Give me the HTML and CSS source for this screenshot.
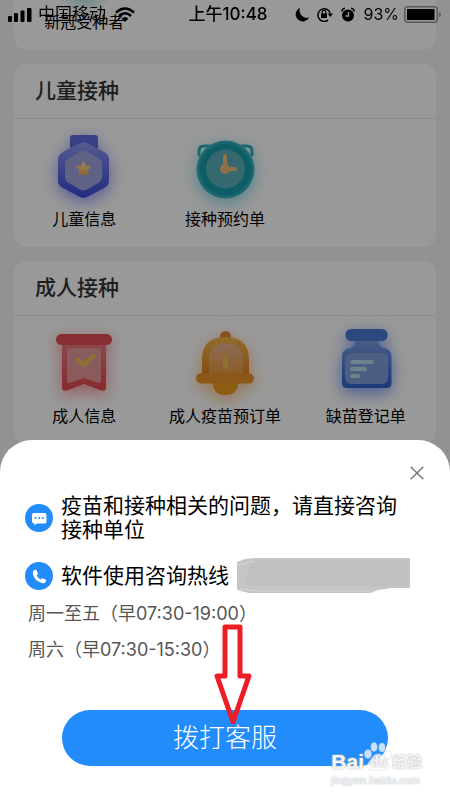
FILE: index.html
```html
<!DOCTYPE html>
<html lang="zh-CN">
<head>
<meta charset="utf-8">
<meta name="viewport" content="width=device-width, initial-scale=1">
<title>疫苗接种</title>
<link rel="stylesheet" href="styles.css">
</head>

<body>

<main class="page">
  <section class="card card-scrolled">
    <div class="grid">
      <a class="item" href="#"><span class="item-label">新冠受种者</span></a>
    </div>
  </section>

  <section class="card">
    <h2 class="card-title">儿童接种</h2>
    <div class="grid">
      <a class="item" href="#">
        <svg class="item-icon glow-indigo" viewBox="0 0 80 80">
          <defs>
            <linearGradient id="indigo" x1="0" y1="0" x2="0" y2="1">
              <stop offset="0" stop-color="#8e96f0"/><stop offset="1" stop-color="#3a49d6"/>
            </linearGradient>
            <linearGradient id="gold" x1="0" y1="0" x2="0" y2="1">
              <stop offset="0" stop-color="#ffd9a0"/><stop offset="1" stop-color="#f0a848"/>
            </linearGradient>
          </defs>
          <path d="M29 8h22q3 0 3 3v13H26V11q0-3 3-3z" fill="#5f6bdc"/>
          <path d="M35 16.500q4.500-2.500 9 0l17 9q4 2.500 4 7v21q0 4.500-4 7l-17 9q-4.500 2.500-9 0l-17-9q-4-2.500-4-7v-21q0-4.500 4-7z" fill="url(#indigo)"/>
          <path d="M36 24.500q3.500-2 7 0l12 7q3 2 3 5v14q0 3-3 5l-12 7q-3.500 2-7 0l-12-7q-3-2-3-5v-14q0-3 3-5z" fill="#9ea3dc"/>
          <path d="M39.500 35l2.100 4.200 4.700.7-3.400 3.300.8 4.700-4.200-2.200-4.200 2.200.8-4.700-3.400-3.300 4.700-.7z" fill="url(#gold)" stroke="url(#gold)" stroke-width="1.500" stroke-linejoin="round"/>
        </svg>
        <span class="item-label">儿童信息</span>
      </a>
      <a class="item" href="#">
        <svg class="item-icon glow-teal" viewBox="0 0 80 80">
          <defs>
            <radialGradient id="teal" cx=".5" cy=".5" r=".5">
              <stop offset="0" stop-color="#12909e"/><stop offset=".85" stop-color="#189caa"/><stop offset="1" stop-color="#42bac6"/>
            </radialGradient>
          </defs>
          <path d="M14 28v-4q0-5 5-5h6M67 28v-4q0-5-5-5h-6" fill="none" stroke="#28aebb" stroke-width="3" stroke-linecap="round"/>
          <circle cx="40.500" cy="42.500" r="29" fill="url(#teal)"/>
          <circle cx="40.500" cy="42" r="19.500" fill="#5bb0ba"/>
          <path d="M40 29v13h10" fill="none" stroke="#f0bd7c" stroke-width="4" stroke-linecap="round" stroke-linejoin="round"/>
          <circle cx="40" cy="42" r="5" fill="#eeb976"/>
        </svg>
        <span class="item-label">接种预约单</span>
      </a>
    </div>
  </section>

  <section class="card">
    <h2 class="card-title">成人接种</h2>
    <div class="grid">
      <a class="item" href="#">
        <svg class="item-icon glow-red" viewBox="0 0 80 80">
          <defs>
            <linearGradient id="red" x1="0" y1="0" x2="0" y2="1">
              <stop offset="0" stop-color="#e87a7e"/><stop offset="1" stop-color="#e4474b"/>
            </linearGradient>
          </defs>
          <path d="M18 18h44v45q0 5-5 3.500L40 60l-17 6.500q-5 1.500-5-3.500z" fill="url(#red)"/>
          <rect x="12" y="10" width="56" height="11" rx="5.500" fill="#e34f55"/>
          <path d="M26 24h28q3 0 3 3v29q0 4-4 2.500L40 54l-13 4.500q-4 1.500-4-2.500V27q0-3 3-3z" fill="#e5989c"/>
          <path d="M33.500 35.500l6 5.500 10-9" fill="none" stroke="#eec04a" stroke-width="4" stroke-linecap="round" stroke-linejoin="round"/>
        </svg>
        <span class="item-label">成人信息</span>
      </a>
      <a class="item" href="#">
        <svg class="item-icon glow-orange" viewBox="0 0 80 80">
          <defs>
            <linearGradient id="orange" x1="0" y1="0" x2="0" y2="1">
              <stop offset="0" stop-color="#f2b44c"/><stop offset="1" stop-color="#e08020"/>
            </linearGradient>
            <linearGradient id="peach" x1="0" y1="0" x2="0" y2="1">
              <stop offset="0" stop-color="#e8b48c"/><stop offset="1" stop-color="#ec9a40"/>
            </linearGradient>
          </defs>
          <circle cx="40.500" cy="12.500" r="5.500" fill="#e08a34"/>
          <path d="M28 58h25q0 13-12.500 13T28 58z" fill="#eb9a20"/>
          <path d="M17 50V36q0-23 23.500-23T64 36v14z" fill="url(#orange)"/>
          <path d="M24 50V36q0-16.500 17-16.500T58 36v14z" fill="url(#peach)"/>
          <rect x="11" y="49" width="58" height="10.500" rx="5.250" fill="#ea9228"/>
          <rect x="38" y="30" width="5" height="15" rx="2.500" fill="#f0bc4c"/>
        </svg>
        <span class="item-label">成人疫苗预订单</span>
      </a>
      <a class="item" href="#">
        <svg class="item-icon glow-blue" viewBox="0 0 80 80">
          <defs>
            <linearGradient id="blue" x1="0" y1="0" x2="0" y2="1">
              <stop offset="0" stop-color="#7a9ce0"/><stop offset="1" stop-color="#2c62cc"/>
            </linearGradient>
          </defs>
          <path d="M29 16h24v3q0 4 5 5 7.500 1.500 7.500 8v27q0 5-5 5H21q-5 0-5-5V32q0-6.500 8-8 5-1 5-5z" fill="url(#blue)"/>
          <rect x="19.500" y="5" width="42" height="12" rx="5.500" fill="#4a78d4"/>
          <rect x="19" y="29" width="43" height="31" rx="6" fill="#7f9dd8"/>
          <path d="M26 38h20M26 45h13M26 52h6" stroke="#b4dcec" stroke-width="4" stroke-linecap="round"/>
        </svg>
        <span class="item-label">缺苗登记单</span>
      </a>
    </div>
  </section>
</main>

<div class="mask"></div>

<header class="status">
  <div class="status-left">
    <svg width="24" height="15" viewBox="0 0 24 15">
      <rect x="0" y="9" width="4" height="6" rx="1"/><rect x="6" y="6" width="4" height="9" rx="1"/><rect x="12.500" y="3.500" width="4" height="11.500" rx="1"/><rect x="19" y="1" width="4.500" height="14" rx="1"/>
    </svg>
    <span>中国移动</span>
    <svg width="20" height="15" viewBox="0 0 20 15">
      <path d="M1 5.500q9-8 18 0M4 9q6-5.500 12 0" fill="none" stroke="#000" stroke-width="2.500"/>
      <path d="M6.500 11.500q3.500-3 7 0L10 15z"/>
    </svg>
  </div>
  <div class="status-time">上午10:48</div>
  <div class="status-right">
    <svg width="14" height="15" viewBox="0 0 14 15"><path d="M5 1a7 7 0 1 0 9 9.500A7.300 7.300 0 0 1 5 1z"/></svg>
    <svg width="16" height="15" viewBox="0 0 16 15">
      <path d="M11 13.200A6.300 6.300 0 1 1 13.200 6" fill="none" stroke="#000" stroke-width="1.500"/>
      <path d="M10.500 6.500h5.500L13.300 10zM4 6.500h6V11H4z"/>
      <path d="M5.200 7V5.200a1.800 1.800 0 0 1 3.600 0V7" fill="none" stroke="#000" stroke-width="1.200"/>
    </svg>
    <svg width="14" height="15" viewBox="0 0 14 15">
      <circle cx="7" cy="8.500" r="6"/>
      <path d="M.8 4.500Q1 1.500 4 1.200M13.200 4.500Q13 1.500 10 1.200" fill="none" stroke="#000" stroke-width="1.500"/>
      <path d="M7.500 5v4H4.500" fill="none" stroke="#999" stroke-width="1.300"/>
    </svg>
    <span class="percent">93%</span>
    <svg width="38" height="17" viewBox="0 0 38 17">
      <rect x=".8" y=".8" width="32.500" height="15.400" rx="3" fill="none" stroke="#5c5c5c" stroke-width="1.500"/>
      <rect x="3" y="3" width="27.500" height="11"/>
      <path d="M35 6q2 .5 2 2.500T35 11z" fill="#5c5c5c"/>
    </svg>
  </div>
</header>

<div class="sheet" role="dialog" aria-label="客服">
  <button class="close" type="button" aria-label="关闭">
    <svg width="14" height="14" viewBox="0 0 14 14"><path d="M.7.700l12.600 12.600M13.300.700L.700 13.300" stroke="#777a80" stroke-width="1.500"/></svg>
  </button>

  <div class="row">
    <svg class="row-icon" viewBox="0 0 28 28">
      <circle cx="14" cy="14" r="14" fill="#228cfa"/>
      <path d="M9 9h10.500q2 0 2 2v6.500q0 2-2 2H12l-2.500 2v-2H9q-2 0-2-2V11q0-2 2-2z" fill="#fff"/>
      <g fill="#228cfa"><circle cx="10.700" cy="14" r="1"/><circle cx="14.200" cy="14" r="1"/><circle cx="17.700" cy="14" r="1"/></g>
    </svg>
    <p>疫苗和接种相关的问题，请直接咨询接种单位</p>
  </div>

  <div class="row row-hotline">
    <svg class="row-icon" viewBox="0 0 28 28">
      <circle cx="14" cy="14" r="14" fill="#228cfa"/>
      <path d="M9.800 7.800c-1.800.8-2.500 2.700-1.600 5.200 1.400 4 4 6.500 7.800 7.800 2.400.8 4 .2 4.900-1.400.4-.8.200-1.300-.5-1.800l-2-1.200c-.7-.4-1.200-.3-1.700.2l-.8.9c-2-.8-3.400-2.200-4.200-4.200l.8-.8c.5-.5.5-1 .3-1.600l-1-2.200c-.4-.8-1-1.200-2-.9z" fill="#fff"/>
    </svg>
    <p>软件使用咨询热线</p>
    <svg class="smudge" width="174" height="36" viewBox="0 0 174 36">
      <path d="M0 4l8-3 9-1h156v30h-18l-14 2-8 3H12l-8-2-4-1z" fill="#c5c5c5"/>
      <path d="M14 5l8-2h150v24l-36 1H12l-4-4 3-8z" fill="#c1c1c1"/>
      <path d="M1 7l16-4M2 31l20 2h110" fill="none" stroke="#d6d6d6"/>
    </svg>
  </div>

  <div class="hours">
    <p>周一至五（早07:30-19:00）</p>
    <p>周六（早07:30-15:30）</p>
  </div>

  <div class="action">
    <button class="call" type="button">拨打客服</button>
    <svg class="arrow" width="38" height="104" viewBox="0 0 38 104">
      <path d="M11 3h15v49h9L19 98 3 52h8z" fill="none" stroke="#ee1c25" stroke-width="5" stroke-linejoin="round"/>
    </svg>
  </div>

  <div class="watermark">
    <div class="brand">
      <span>Bai</span>
      <span class="paw">
        <svg width="28" height="30" viewBox="0 0 28 30" fill="#fff" fill-opacity=".75" stroke="#ddd" stroke-width=".6">
          <ellipse cx="4" cy="12" rx="3.300" ry="4.300"/><ellipse cx="10" cy="5" rx="3" ry="4.300"/><ellipse cx="18" cy="5.500" rx="3" ry="4.300"/><ellipse cx="24" cy="13" rx="3.200" ry="4.200"/>
          <path d="M14 12c5 0 6 5 9 8 3 4 1 8-4 8H9c-5 0-7-4-4-8 3-3 4-8 9-8z"/>
        </svg>
        <span class="du">du</span>
      </span>
      <span class="jingyan">经验</span>
    </div>
    <div class="site">jingyan.baidu.com</div>
  </div>
</div>

</body>
</html>
```

FILE: styles.css
```css
* {
  margin: 0;
  padding: 0;
  box-sizing: border-box;
}

body {
  min-height: 100vh;
  overflow: hidden;
  background: #f3f3f3;
  color: #000;
  font-family: Inter, "Noto Sans CJK SC", sans-serif;
  font-size: 16px;
}

button {
  border: 0;
  background: none;
  font-family: inherit;
  cursor: pointer;
}

svg {
  display: block;
  flex: none;
}

/* page under the mask */
.page {
  display: flex;
  flex-direction: column;
  gap: 14px;
  padding: 0 14px;
}

.card {
  border-radius: 12px;
  background: #fff;
}
.card-scrolled {
  padding-top: 2px;
  border-radius: 0 0 12px 12px;
  background: radial-gradient(circle at 70px -20px, #7cc8d0 0, #fff 34px);
}
.card-title {
  padding: 0 21px;
  border-bottom: 1px solid #ececec;
  color: #333;
  font-size: 21px;
  font-weight: 500;
  line-height: 54px;
}

.grid {
  display: grid;
  grid-template-columns: repeat(3, 1fr);
  padding: 8px 0 16px;
}
.item {
  display: flex;
  flex-direction: column;
  align-items: center;
  color: #000;
  text-decoration: none;
}
.item-icon {
  width: 80px;
  height: 80px;
}
.item-label {
  line-height: 24px;
  white-space: nowrap;
}

.glow-indigo { filter: drop-shadow(0 5px 8px rgba(70, 80, 240, .6)); }
.glow-teal { filter: drop-shadow(0 5px 8px rgba(30, 180, 200, .5)); }
.glow-red { filter: drop-shadow(0 5px 8px rgba(240, 80, 80, .6)); }
.glow-orange { filter: drop-shadow(0 5px 8px rgba(245, 150, 50, .6)); }
.glow-blue { filter: drop-shadow(0 5px 8px rgba(60, 110, 230, .7)); }

.mask {
  position: fixed;
  inset: 0;
  background: rgba(0, 0, 0, .4);
}

/* status bar */
.status {
  position: fixed;
  top: 0;
  left: 0;
  right: 0;
  display: grid;
  grid-template-columns: 1fr auto 1fr;
  align-items: center;
  padding: 0 8px;
  font-size: 17px;
  line-height: 28px;
}
.status-left, .status-right {
  display: flex;
  align-items: center;
  gap: 6px;
}
.status-left span {
  margin-right: 3px;
}
.status-right {
  justify-content: flex-end;
  gap: 8px;
}
.percent {
  margin-right: -3px;
  font-size: 16px;
}
.status-time {
  padding-left: 6px;
  font-weight: 500;
}

/* bottom sheet */
.sheet {
  position: fixed;
  left: 0;
  right: 0;
  bottom: 0;
  padding: 54px 0 32px;
  border-radius: 32px 32px 0 0;
  background: #fff;
}
.close {
  position: absolute;
  top: 20px;
  right: 20px;
  padding: 6px;
}

.row {
  display: flex;
  align-items: center;
  gap: 8px;
  padding: 0 40px 0 25px;
  font-size: 21px;
  line-height: 24px;
}
.row-hotline {
  margin-top: 16px;
  padding-right: 24px;
}
.row-icon {
  width: 28px;
  height: 28px;
}

.hours {
  margin: 2px 28px 42px;
  color: #555;
  font-size: 18px;
  line-height: 36px;
}

.action {
  position: relative;
  margin: 0 62px;
}
.call {
  display: block;
  width: 100%;
  border-radius: 28px;
  background: #228cfa;
  color: #fff;
  font-size: 26px;
  font-weight: 300;
  line-height: 56px;
}
.arrow {
  position: absolute;
  bottom: 38px;
  left: calc(50% - 11px);
}

.watermark {
  position: absolute;
  right: 28px;
  bottom: 10px;
  color: rgba(255, 255, 255, .85);
  text-shadow: 0 0 2px #bbb, 0 0 1px #ccc;
}
.brand {
  display: flex;
  align-items: flex-end;
  font-family: "Liberation Sans", "Noto Sans CJK SC", sans-serif;
  font-size: 21px;
  font-weight: 700;
  line-height: 20px;
}
.paw {
  position: relative;
}
.du {
  position: absolute;
  left: 6px;
  bottom: 0;
  font-size: 14px;
}
.jingyan {
  font-size: 15px;
}
.site {
  font-family: "Liberation Sans", sans-serif;
  font-size: 11px;
  line-height: 16px;
}
```
